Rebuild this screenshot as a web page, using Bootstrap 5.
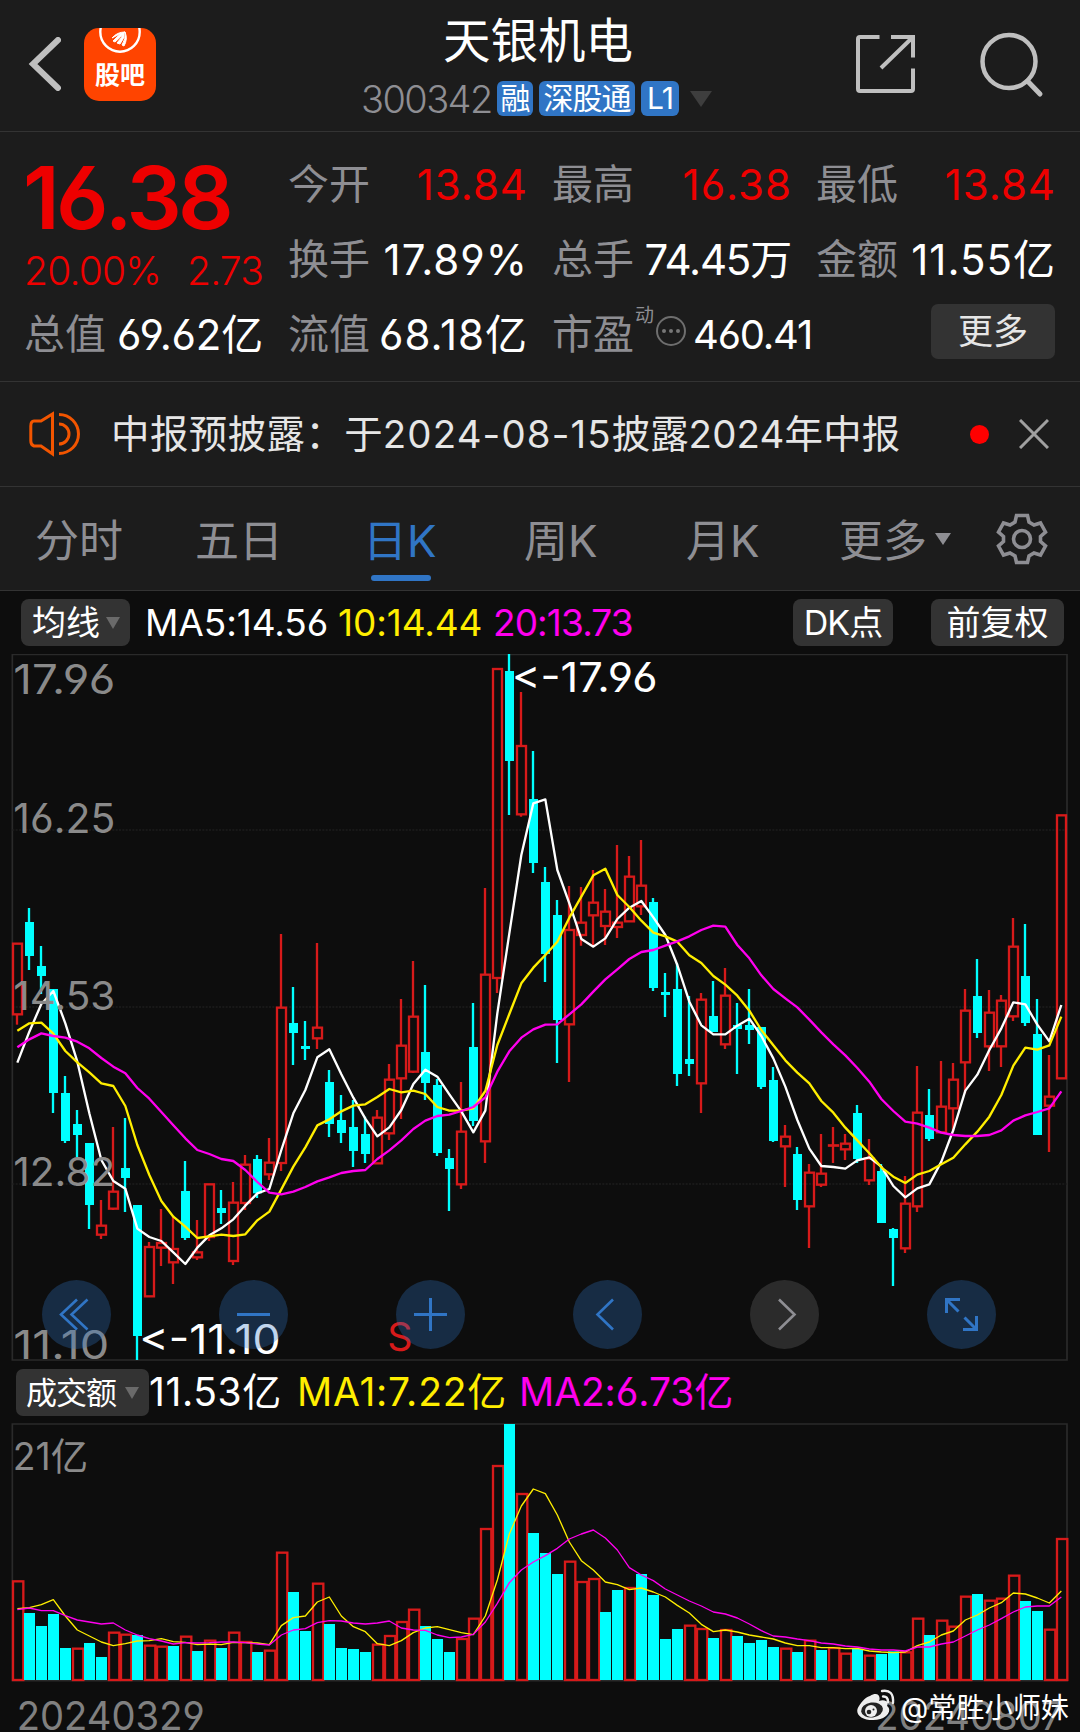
<!DOCTYPE html>
<html lang="zh-CN">
<head>
<meta charset="utf-8">
<meta name="viewport" content="width=device-width, initial-scale=1">
<title>天银机电 300342</title>
<link href="https://cdn.jsdelivr.net/npm/bootstrap@5.3.0/dist/css/bootstrap.min.css" rel="stylesheet">
<style>
body{background:#0d0d0d;color:#fff;font-family:Inter,"Noto Sans CJK SC",sans-serif;font-feature-settings:"cv03","cv04";width:1080px;height:1732px;overflow:hidden;line-height:1}
svg{display:block;flex-shrink:0}
.panel{background:#1c1c1c;border-bottom:1px solid #333}
.white-sp{white-space:nowrap}
.topbar{height:132px}
.back-ico{margin:37px 0 0 28px}
.guba{width:72px;height:73px;margin:28px 0 0 23px;border-radius:15px;background:#ff4400;overflow:hidden;position:relative}
.guba-text{position:absolute;left:0;right:0;top:34px;text-align:center;font-weight:700;font-size:25px;line-height:27px}
.title-col{width:352px;margin-left:205px}
.stock-name{font-size:47.500px;line-height:60px;margin:11px 0 0 82px}
.code-row{height:35px;margin-top:10px}
.code-num{font-size:38px;color:#8e8e93;width:136px;letter-spacing:-1.6px;font-weight:350}
.tag{background:#3075c5;height:35px;border-radius:6px;font-size:30px;line-height:35px;text-align:center;letter-spacing:-1px}
.quote{height:250px;padding:15px 24px 0;display:grid;grid-template-columns:repeat(4,239px);grid-template-rows:repeat(3,75px);column-gap:25px}
.lbl{color:#8e8e93;font-size:41px}
.num{font-size:42px;letter-spacing:-1.2px}
.num-wide{letter-spacing:1px;margin-right:-1px}
.num-mid{letter-spacing:-.2px}
.up{color:#ee0000}
.price{font-size:87px;font-weight:600;letter-spacing:-3.8px;line-height:72px;padding-top:15px;margin-left:-1px}
.chg{font-size:39px;font-weight:350;line-height:40px;margin-top:17px;letter-spacing:-.8px}
.dyn{font-size:19px;color:#8e8e93;margin:-38px 0 0 1px}
.btn-gray{background:#333;border:0;border-radius:7px;color:#fff;padding:0;line-height:1}
.notice{height:105px;font-size:38.400px;color:#e6e6e6}
.notice-text{margin-left:30px;width:803px}
.red-dot{width:19px;height:19px;border-radius:50%;background:#f00;margin-left:56px}
.tabs{height:104px;display:grid;grid-template-columns:160px 174px 155px 162px 153px 156px 60px;padding-left:35px;font-size:44px;color:#8e8e93}
.tabs>div{position:relative;padding-top:30px;line-height:48px}
.tab-on{color:#3075c5;text-indent:-6px}
.tab-on::after{content:"";position:absolute;left:2px;top:88px;width:60px;height:6px;border-radius:3px;background:#3075c5}
.tool{height:63px;padding:8px 0 0 21px}
.tool .btn-gray{height:47px;font-size:34px;border-radius:8px}
.ma{font-size:37px;letter-spacing:-.1px;line-height:48px}
.yel{color:#ffee00}.mag{color:#ff00ee}
.kwrap{height:707px;position:relative}
.round-row{position:absolute;left:42px;top:626px;gap:108px}
.rnd{width:69px;height:69px;border-radius:50%;background:rgba(48,117,197,.3)}
.rnd-off{background:rgba(136,136,136,.25)}
.vtool{height:62px;padding:8px 0 0 16px}
.vtool .btn-gray{height:47px;font-size:31px;border-radius:7px}
.vma{font-size:39px;line-height:46px}
.vwrap{height:309px;position:relative}
.wm{position:absolute;left:856px;top:265px}
</style>
</head>
<body>
<header class="panel topbar d-flex align-items-start white-sp">
  <svg class="back-ico" width="33" height="54" viewBox="0 0 33 54" fill="none" stroke="#bfbfbf" stroke-width="6"><path d="M30 3L5 27L30 51" stroke-linecap="round"/></svg>
  <div class="guba">
    <svg width="73" height="73" viewBox="0 0 73 73" fill="none"><circle cx="36" cy="4" r="19.7" stroke="#fff" stroke-width="2.4"/><path d="M28 10q5-6 13-6q-6 2-13 6zM29 13q6-7 12-9q-4 5-10 10zM33 15q5-5 7-11q1 6-4 12zM38 17q4-6 3-13q3 7-1 14z" fill="#fff" stroke="#fff" stroke-width="1"/></svg>
    <div class="guba-text">股吧</div>
  </div>
  <div class="title-col">
    <div class="stock-name">天银机电</div>
    <div class="code-row d-flex align-items-center">
      <span class="code-num">300342</span>
      <span class="tag" style="width:36px">融</span>
      <span class="tag" style="width:96px;margin-left:6px">深股通</span>
      <span class="tag" style="width:38px;margin-left:6px">L1</span>
      <svg width="22" height="16" viewBox="0 0 22 16" style="margin-left:11px"><path d="M0 0H22L11 16z" fill="#3e3e3e"/></svg>
    </div>
  </div>
  <svg width="60" height="60" viewBox="0 0 60 60" fill="none" stroke="#bfbfbf" stroke-width="4" style="margin:34px 0 0 142px"><path d="M24.500 3H5Q3 3 3 5V55Q3 57 5 57H56Q58 57 58 55V34.500M36 3H58V23.500M58 3L26 34"/></svg>
  <svg width="66" height="66" viewBox="0 0 66 66" fill="none" stroke="#bfbfbf" stroke-width="4.500" style="margin:32px 0 0 64px"><circle cx="30" cy="29.500" r="26.500"/><path d="M48.500 49L61 62" stroke-linecap="round" stroke-width="5"/></svg>
</header>

<section class="panel quote white-sp">
  <div style="grid-row:span 2">
    <div class="price up">16.38</div>
    <div class="chg up d-flex justify-content-between"><span>20.00%</span><span>2.73</span></div>
  </div>
  <div class="d-flex align-items-center justify-content-between"><span class="lbl">今开</span><span class="num num-wide up">13.84</span></div>
  <div class="d-flex align-items-center justify-content-between"><span class="lbl">最高</span><span class="num num-wide up">16.38</span></div>
  <div class="d-flex align-items-center justify-content-between"><span class="lbl">最低</span><span class="num num-wide up">13.84</span></div>
  <div class="d-flex align-items-center justify-content-between"><span class="lbl">换手</span><span class="num num-wide">17.89%</span></div>
  <div class="d-flex align-items-center justify-content-between"><span class="lbl">总手</span><span class="num">74.45万</span></div>
  <div class="d-flex align-items-center justify-content-between"><span class="lbl">金额</span><span class="num num-wide">11.55亿</span></div>
  <div class="d-flex align-items-center justify-content-between"><span class="lbl">总值</span><span class="num num-mid">69.62亿</span></div>
  <div class="d-flex align-items-center justify-content-between"><span class="lbl">流值</span><span class="num num-wide">68.18亿</span></div>
  <div class="d-flex align-items-center"><span class="lbl">市盈</span><span class="dyn">动</span>
    <svg width="32" height="32" viewBox="0 0 32 32" fill="none" style="margin:-8px 6px 0 1px"><circle cx="16" cy="16" r="14" stroke="#6e6e6e" stroke-width="2"/><g fill="#777"><circle cx="9" cy="16" r="2"/><circle cx="16" cy="16" r="2"/><circle cx="23" cy="16" r="2"/></g></svg>
    <span class="num" style="font-size:40px">460.41</span></div>
  <div class="d-flex justify-content-end"><button class="btn btn-gray" style="width:124px;height:55px;margin-top:7px;font-size:35px;color:#e6e6e6">更多</button></div>
</section>

<section class="panel notice d-flex align-items-center white-sp">
  <svg width="52" height="46" viewBox="0 0 52 46" fill="none" stroke="#f25500" stroke-width="3" style="margin-left:29px"><path d="M23.500 3V43L12 35H5Q1.800 34 1.800 30V15Q1.800 10 5 10H12z"/><path d="M30 3.500A19.500 19.500 0 0 1 30 42.500M30 13A10 10 0 0 1 30 33"/></svg>
  <div class="notice-text"><span style="letter-spacing:.5px">中报预披露：</span>于<span style="letter-spacing:1.150px">2024-08-15</span>披露<span style="letter-spacing:.2px">2024年中报</span></div>
  <i class="red-dot"></i>
  <svg width="30" height="30" viewBox="0 0 30 30" stroke="#a0a0a0" stroke-width="3" style="margin-left:30px"><path d="M1 1L29 29M29 1L1 29"/></svg>
</section>

<nav class="panel tabs white-sp">
  <div>分时</div><div>五日</div><div class="tab-on">日K</div><div>周K</div><div>月K</div>
  <div class="d-flex">更多<svg width="16" height="12" viewBox="0 0 16 12" style="margin:16px 0 0 8px"><path d="M0 0H16L8 12z" fill="#8e8e93"/></svg></div>
  <svg width="54" height="54" viewBox="-27 -27 54 54" fill="none" stroke="#8e8e93" stroke-width="3.600" style="margin-top:25px"><circle r="8.500"/><path d="M-5.500-23.500H5.500L7-17L12-14L18.500-16L23.500-7L18.500-2.500V2.500L23.500 7L18.500 16L12 14L7 17L5.500 23.500H-5.500L-7 17L-12 14L-18.500 16L-23.500 7L-18.500 2.500V-2.500L-23.500-7L-18.500-16L-12-14L-7-17z"/></svg>
</nav>

<div class="tool d-flex white-sp">
  <button class="btn btn-gray d-flex align-items-center" style="width:109px;padding-left:11px">均线<svg width="14" height="12" viewBox="0 0 14 12" style="margin-left:6px"><path d="M0 0H14L7 12z" fill="#6a6a6a"/></svg></button>
  <span class="ma" style="width:193px;margin-left:15px">MA5:14.56</span>
  <span class="ma yel" style="width:155px">10:14.44</span>
  <span class="ma mag" style="width:300px;letter-spacing:-.9px">20:13.73</span>
  <button class="btn btn-gray" style="width:100px;letter-spacing:-1px">DK点</button>
  <button class="btn btn-gray" style="width:133px;margin-left:38px">前复权</button>
</div>

<div class="kwrap">
  <svg id="kchart" width="1080" height="707" viewBox="0 -678 3240 2121"></svg>
  <div class="round-row d-flex">
    <div class="rnd"><svg width="69" height="69" fill="none" stroke="#3075c5" stroke-width="2.600"><path d="M35 19.500L19 34.500L35 49.500M45.500 19.500L29.500 34.500L45.500 49.500"/></svg></div>
    <div class="rnd"><svg width="69" height="69" stroke="#3075c5" stroke-width="3"><path d="M18 34.500H51"/></svg></div>
    <div class="rnd"><svg width="69" height="69" stroke="#3075c5" stroke-width="3"><path d="M18 34.500H51M34.500 18V51"/></svg></div>
    <div class="rnd"><svg width="69" height="69" fill="none" stroke="#3075c5" stroke-width="2.600"><path d="M40 19.500L24.500 34.500L40 49.500"/></svg></div>
    <div class="rnd rnd-off"><svg width="69" height="69" fill="none" stroke="#8e8e93" stroke-width="2.600"><path d="M29 19.500L44.500 34.500L29 49.500"/></svg></div>
    <div class="rnd"><svg width="69" height="69" fill="none" stroke="#3075c5" stroke-width="3"><path d="M33 19.500H19.500V33M20 20L31.500 31.500M36 49.500H49.500V36M49 49L37.500 37.500"/></svg></div>
  </div>
</div>

<div class="vtool d-flex white-sp">
  <button class="btn btn-gray d-flex align-items-center" style="width:133px;padding-left:10px;letter-spacing:-1px">成交额<svg width="14" height="12" viewBox="0 0 14 12" style="margin-left:9px"><path d="M0 0H14L7 12z" fill="#6a6a6a"/></svg></button>
  <span class="ma vma" style="width:148px;letter-spacing:.6px">11.53亿</span>
  <span class="ma vma yel" style="width:222px;letter-spacing:.8px">MA1:7.22亿</span>
  <span class="ma vma mag">MA2:6.73亿</span>
</div>

<div class="vwrap">
  <svg id="vchart" width="1080" height="309" viewBox="0 189 3240 927"></svg>
  <div class="wm">
    <svg width="215" height="38" viewBox="0 0 215 38">
      <path d="M14 8C22 3 25 9 23 13C29 11 33 14 31 18C36 21 33 32 17 32C4 32-2 25 3 18C6 13 10 9 14 8z" fill="#eee"/>
      <ellipse cx="16" cy="22" rx="11" ry="7.500" fill="#222" transform="rotate(-8 16 22)"/><circle cx="15" cy="23" r="6" fill="#eee"/><circle cx="13" cy="24" r="2.300" fill="#222"/><circle cx="17.500" cy="21.500" r="1" fill="#222"/>
      <path d="M26 3Q38 1 37 15M27 8.500Q32 8 32 14" fill="none" stroke="#eee" stroke-width="2.400" stroke-linecap="round"/>
      <text x="45" y="29.500" font-size="28" fill="#fff" textLength="168" lengthAdjust="spacingAndGlyphs">@常胜小师妹</text>
    </svg>
  </div>
</div>

<script src="https://cdn.jsdelivr.net/npm/bootstrap@5.3.0/dist/js/bootstrap.bundle.min.js"></script>
<script>
// Both charts use units of a third of a pixel; one session is 36 units wide.
const STEP = 36, RED = '#d71a1a', CYAN = '#00ffff', YEL = '#ffee00', MAG = '#ff00ee';
const mid = i => 52 + STEP * i;

// Each session: direction, high, body top, body bottom, low
const days = `R 190 190 404 434|C 84 126 228 270|C 198 258 288 342|C 327 327 639 699|C 588 639 783 789|C 690 732 765 831|C 789 789 975 1047|R 960 1036 1065 1077|R 741 934 987 990|C 714 864 894 996|C 975 975 1368 1440|R 1086 1100 1250 1250|R 987 1088 1104 1158|R 1010 1106 1148 1212|C 843 933 1074 1080|R 1020 1116 1133 1140|R 912 912 1072 1083|C 930 984 999 1032|R 906 967 1144 1155|R 825 853 970 990|C 825 837 940 954|R 774 847 884 900|R 162 382 850 873|C 321 429 459 555|C 423 498 507 540|R 189 442 476 507|C 570 606 732 771|C 645 720 759 789|C 660 741 813 861|C 710 762 822 849|R 690 712 851 851|R 552 598 761 780|R 357 496 596 717|R 243 409 576 579|C 315 516 609 660|C 597 615 819 828|C 807 834 867 993|R 606 754 914 927|C 369 501 723 738|R 24 283 785 849|R -634 -634 295 339|C -678 -627 -357 -195|R -564 -403 -196 -190|C -387 -243 -51 -21|C -39 6 222 306|C 60 105 420 549|R 18 149 434 606|R 21 127 166 197|R -30 67 107 195|R 27 94 139 195|R -105 127 142 174|R -72 -11 125 125|R -120 16 80 105|C 54 66 324 333|C 279 336 345 411|C 250 327 582 618|C 348 537 552 588|R 339 358 611 699|C 303 408 456 456|R 264 346 494 507|C 369 435 447 582|C 327 435 450 492|C 441 441 621 627|C 561 600 783 786|R 735 769 800 921|C 801 822 960 990|R 852 877 980 1104|R 762 880 915 921|R 741 795 795 849|R 762 790 809 840|C 675 699 837 849|R 777 835 902 915|C 852 873 1029 1029|C 1044 1047 1074 1218|R 888 970 1106 1119|R 558 697 980 996|C 627 705 777 783|R 543 679 758 758|R 549 598 686 750|R 327 391 548 640|C 237 348 459 474|R 330 397 500 573|R 345 361 500 561|R 114 199 410 423|C 132 288 429 438|C 357 462 765 765|R 525 649 678 816|R -195 -195 596 596`.split('|').map(s => s.split(' '));
const ma5 = [548,455,372,333,430,545,700,840,903,926,1046,1071,1083,1117,1152,1103,1066,1045,1018,977,940,927,810,700,630,532,508,583,653,716,769,742,690,612,569,590,643,694,757,692,400,160,-75,-230,-242,-30,70,177,200,175,117,83,63,112,165,255,365,436,463,463,437,416,468,535,620,720,806,858,861,866,841,832,860,918,952,925,913,845,750,632,584,510,445,367,373,434,484,375];
const ma10 = [452,430,428,461,513,547,577,610,618,678,795,885,963,1010,1040,1074,1069,1064,1068,1063,1021,995,928,860,802,736,718,694,677,673,651,627,637,632,642,681,692,692,685,633,495,402,310,263,225,185,113,50,-14,-34,45,81,122,158,169,185,226,249,288,314,347,392,450,496,541,578,610,663,698,743,781,820,862,890,909,884,873,853,833,793,755,710,645,557,503,509,496,410];
const ma20 = [502,478,460,468,473,485,505,534,560,580,624,656,696,736,775,810,822,837,843,870,906,938,943,935,921,904,892,879,873,870,837,811,781,747,722,708,704,693,681,652,575,514,473,448,434,433,403,373,335,298,268,237,216,210,197,184,169,150,137,140,195,235,286,327,355,382,419,457,493,526,564,605,657,693,725,731,743,758,765,768,768,765,751,722,706,696,685,634];
const vols = 'R664 C759 C798 C762 C864 R866 C849 C891 R818 R824 C825 R857 R860 C858 R830 C873 R842 C864 R818 R846 C876 R872 R578 C696 C813 R671 C792 C864 C867 C876 R854 R828 R786 R749 C798 C837 C876 R837 R776 R507 R318 C192 R402 C519 C579 C642 R605 R666 R657 C756 C690 R684 C642 C705 C837 C807 R797 R807 C834 R810 C828 C849 C840 C861 R866 C876 R842 C870 R864 R881 C866 R887 C882 C874 R877 R776 C825 R782 R800 R710 C702 R722 R716 R647 C723 C753 R809 R537'.split(' ');
const vma1 = [746,743,734,719,768,810,828,846,857,851,843,842,836,845,847,854,852,854,847,848,849,854,797,773,768,726,711,768,800,815,851,857,842,818,804,800,809,818,824,768,660,522,438,387,401,465,546,602,630,666,674,689,684,696,711,736,759,793,815,810,816,825,831,837,849,857,857,863,863,866,865,873,876,878,876,857,846,825,813,780,765,744,728,699,702,714,729,693];
const vma2 = [749,744,752,752,767,780,786,792,789,810,825,836,843,852,848,849,848,846,846,848,852,855,825,810,806,788,782,783,789,792,789,783,804,810,811,825,833,831,823,786,730,668,630,606,587,565,537,522,510,534,570,623,645,662,687,705,723,738,756,762,774,792,812,828,831,837,842,849,852,858,861,867,870,870,873,861,861,852,846,828,810,795,776,756,741,738,738,711];

const line = (a, c, w) => `<polyline fill="none" stroke="${c}" stroke-width="${w}" stroke-linejoin="round" points="${a.map((y, i) => mid(i) + ',' + y).join(' ')}"/>`;
const text = (s, x, y, w, size, c) => `<text x="${x}" y="${y}" font-size="${size}" fill="${c}" textLength="${w}" lengthAdjust="spacingAndGlyphs">${s}</text>`;

let k = `<path d="M37-677H3201V1440H37z" fill="none" stroke="#2a2a2a" stroke-width="5"/>`;
for (const y of [-150, 381, 912]) k += `<path d="M37 ${y}H3201" stroke="#1d1d1d" stroke-width="4" stroke-dasharray="6 4"/>`;
days.forEach(([d, hi, top, bot, lo], i) => {
  const x = mid(i), c = d === 'R' ? RED : CYAN;
  k += `<path d="M${x - 1} ${hi}V${top}M${x - 1} ${bot}V${lo}" stroke="${c}" stroke-width="7"/>`;
  k += d === 'R'
    ? `<rect x="${x - 13}" y="${+top + 1}" width="27" height="${Math.max(bot - top - 2, 1)}" fill="none" stroke="${c}" stroke-width="7"/>`
    : `<rect x="${x - 13}" y="${top}" width="27" height="${bot - top}" fill="${c}"/>`;
});
k += line(ma5, '#fff', 7) + line(ma10, YEL, 7) + line(ma20, MAG, 7);
const G = '#8a8a8a';
k += text('17.96', 40, -558, 306, 122, G) + text('16.25', 40, -142, 306, 122, G) + text('14.53', 40, 389, 306, 120, G)
   + text('12.82', 40, 917, 306, 120, G) + text('11.10', 40, 1437, 288, 120, G);
k += text('&lt;-17.96', 1535, -565, 438, 121, '#fff') + text('&lt;-11.10', 418, 1421, 424, 121, '#fff') + text('S', 1162, 1414, 76, 120, RED);
document.getElementById('kchart').innerHTML = k;

let v = `<path d="M37 192H3201V962H37z" fill="none" stroke="#2a2a2a" stroke-width="5"/>`;
vols.forEach((s, i) => {
  const x = 36 + STEP * i, top = +s.slice(1);
  v += s[0] === 'R'
    ? `<rect x="${x + 3}" y="${top}" width="31" height="${960 - top}" fill="none" stroke="${RED}" stroke-width="7"/>`
    : `<rect x="${x}" y="${top}" width="33" height="${960 - top}" fill="${CYAN}"/>`;
});
v += line(vma1, YEL, 4) + line(vma2, MAG, 4);
v += text('21亿', 38, 330, 226, 113, G) + text('20240329', 50, 1109, 564, 119, '#808080') + text('20240807', 2626, 1109, 562, 119, '#808080');
document.getElementById('vchart').innerHTML = v;
</script>
</body>
</html>
